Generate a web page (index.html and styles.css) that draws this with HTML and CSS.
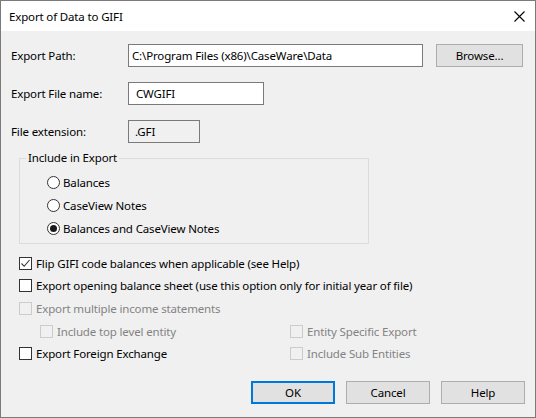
FILE: index.html
```html
<!DOCTYPE html>
<html>
<head>
<meta charset="utf-8">
<link rel="stylesheet" href="styles.css">
</head>
<body>
<div class="window">
  <div class="titlebar">
    <span class="title">Export of Data to GIFI</span>
    <svg class="close" width="11" height="11" viewBox="0 0 11 11"><path d="M0.5 0.5 L10.5 10.5 M10.5 0.5 L0.5 10.5" stroke="#000" stroke-width="1.1" fill="none"/></svg>
  </div>
  <div class="content">
    <div class="field-row">
      <span class="field-label">Export Path:</span>
      <div class="textbox path">C:\Program Files (x86)\CaseWare\Data</div>
      <button class="btn browse">Browse...</button>
    </div>
    <div class="field-row">
      <span class="field-label">Export File name:</span>
      <div class="textbox name">CWGIFI</div>
    </div>
    <div class="field-row">
      <span class="field-label">File extension:</span>
      <div class="textbox ext">.GFI</div>
    </div>
    <fieldset class="group">
      <legend>Include in Export</legend>
      <div class="radios">
        <div class="option"><span class="radio"></span>Balances</div>
        <div class="option"><span class="radio"></span>CaseView Notes</div>
        <div class="option"><span class="radio checked"></span>Balances and CaseView Notes</div>
      </div>
    </fieldset>
    <div class="checks">
      <div class="option wide"><span class="box checked"><svg width="11" height="11" viewBox="0 0 11 11"><path d="M1.5 5.5 L4.2 8.3 L9.5 2" stroke="#333" stroke-width="1.1" fill="none"/></svg></span>Flip GIFI code balances when applicable (see Help)</div>
      <div class="option wide"><span class="box"></span>Export opening balance sheet (use this option only for initial year of file)</div>
      <div class="option wide disabled"><span class="box"></span>Export multiple income statements</div>
      <div class="option disabled indent"><span class="box"></span>Include top level entity</div>
      <div class="option disabled"><span class="box"></span>Entity Specific Export</div>
      <div class="option"><span class="box"></span>Export Foreign Exchange</div>
      <div class="option disabled"><span class="box"></span>Include Sub Entities</div>
    </div>
    <div class="buttons">
      <button class="btn dlg default">OK</button>
      <button class="btn dlg">Cancel</button>
      <button class="btn dlg">Help</button>
    </div>
  </div>
</div>
</body>
</html>
```
FILE: styles.css
```css
html, body {
  margin: 0;
  padding: 0;
  background: #f0f0f0;
}
body {
  font-family: "Noto Sans", "Open Sans", sans-serif;
  font-size: 11.5px;
  letter-spacing: -0.15px;
  color: #000;
}
.window {
  width: 536px;
  height: 418px;
  box-sizing: border-box;
  border: 1px solid #7a7a7a;
  background: #f0f0f0;
  display: flex;
  flex-direction: column;
}
.titlebar {
  height: 30px;
  background: #fff;
  display: flex;
  align-items: center;
  justify-content: space-between;
  padding: 0 10px 0 8px;
}
.title {
  font-size: 11.5px;
}
.close {
  display: block;
}
.content {
  padding: 13px 10px 0 10px;
  display: flex;
  flex-direction: column;
}
.field-row {
  display: flex;
  align-items: center;
  height: 23px;
}
.field-row + .field-row {
  margin-top: 15px;
}
.field-label {
  width: 117px;
  flex: none;
}
.textbox {
  height: 23px;
  box-sizing: border-box;
  border: 1px solid #7a7a7a;
  background: #fff;
  display: flex;
  align-items: center;
  white-space: nowrap;
  overflow: hidden;
}
.path {
  width: 295px;
  padding-left: 3px;
}
.name {
  width: 136px;
  padding-left: 7px;
}
.ext {
  width: 72px;
  padding-left: 6px;
  background: #f0f0f0;
}
.btn {
  font-family: inherit;
  font-size: 11.5px;
  letter-spacing: -0.15px;
  color: #000;
  background: #e1e1e1;
  border: 1px solid #adadad;
  height: 23px;
  box-sizing: border-box;
  padding: 0;
  margin: 0;
}
.browse {
  width: 87px;
  margin-left: 13px;
}
.group {
  margin: 7px 0 0 8px;
  padding: 0;
  width: 350px;
  box-sizing: border-box;
  border: 1px solid #dcdcdc;
}
.group legend {
  margin-left: 6px;
  padding: 0 2px;
  line-height: 16px;
}
.radios {
  padding: 5px 0 3px 27px;
}
.radios .option {
  height: 23px;
}
.option {
  display: flex;
  align-items: center;
  white-space: nowrap;
}
.radio {
  width: 13px;
  height: 13px;
  box-sizing: border-box;
  border: 1px solid #333;
  border-radius: 50%;
  background: #fff;
  margin-right: 3px;
  display: flex;
  align-items: center;
  justify-content: center;
  flex: none;
}
.radio.checked::after {
  content: "";
  width: 7px;
  height: 7px;
  border-radius: 50%;
  background: #1a1a1a;
}
.checks {
  margin: 8px 0 0 8px;
  display: grid;
  grid-template-columns: 271px 1fr;
  grid-template-rows: 23px 21px 24px 22px 23px;
}
.checks .wide {
  grid-column: 1 / 3;
}
.box {
  width: 13px;
  height: 13px;
  box-sizing: border-box;
  border: 1px solid #333;
  background: #fff;
  margin-right: 4px;
  flex: none;
  display: flex;
  align-items: center;
  justify-content: center;
}
.box svg {
  display: block;
}
.disabled {
  color: #838383;
}
.disabled .box {
  border-color: #cccccc;
  background: #f0f0f0;
}
.indent {
  padding-left: 21px;
}
.buttons {
  margin-top: 16px;
  display: flex;
  justify-content: flex-end;
  gap: 11px;
}
.dlg {
  width: 84px;
}
.default {
  border: 2px solid #0078d7;
}
```
